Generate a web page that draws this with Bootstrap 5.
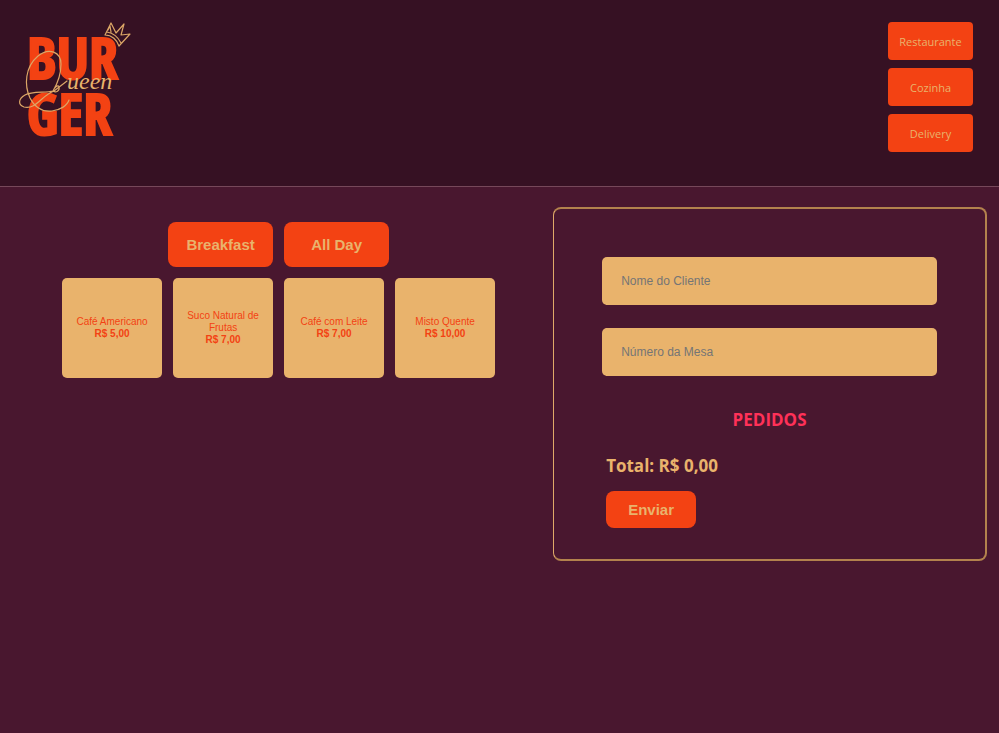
<!DOCTYPE html>
<html lang="pt-BR">
<head>
<meta charset="utf-8">
<meta name="viewport" content="width=device-width, initial-scale=1">
<title>Burger Queen</title>
<link href="https://cdn.jsdelivr.net/npm/bootstrap@5.3.0/dist/css/bootstrap.min.css" rel="stylesheet">
<style>
:root { --wine: #49172f; --wine-dark: #361123; --flame: #f34213; --sand: #e9b36c; --rose: #ff3158; }
body { background: var(--wine); font-family: "Open Sans", sans-serif; }
.top-bar { background: var(--wine-dark); border-bottom: 1px solid #76485a; padding: 20px 26px 34px 17px; }
.logo { width: 116px; height: 120px; overflow: visible; }
.logo .block-text { font: bold 58px "Open Sans Condensed", "Roboto", sans-serif; fill: var(--flame); stroke: var(--flame); stroke-width: 2; }
.logo .script-text { font: italic 24px "Liberation Serif", serif; fill: var(--sand); }
.logo path { fill: none; stroke: #dca767; stroke-width: 1.2; stroke-linecap: round; stroke-linejoin: round; }
.flame-btn, .flame-btn:hover { background: var(--flame); color: var(--sand); border: 0; }
.nav-btn { width: 85px; height: 38px; padding: 2px 0 0; font-size: 11px; border-radius: 4px; }
.nav-stack { gap: 8px; padding-top: 2px; }
.bold-btn { font: bold 15px "Liberation Sans", sans-serif; border-radius: 8px; padding: 0; }
.menu-btn { width: 105px; height: 45px; }
.send-btn { width: 90px; height: 37px; }
.menu-area { gap: 11px; padding-top: 15px; }
.menu-row { gap: 11px; }
.product { width: 100px; height: 100px; padding: 0 12px; border: 0; border-radius: 5px; background: var(--sand); color: var(--flame); font: 10px/12px "Liberation Sans", sans-serif; }
.order { width: 44.5%; border: 2px solid #b3824d; border-left: 1px solid #dfa968; border-radius: 8px; padding: 48px 48px 31px; }
.order-fields { gap: 23px; }
.order-input, .order-input:focus { height: 48px; padding: 0 19px; border: 0; border-radius: 5px; background: var(--sand); font: 12px "Liberation Sans", sans-serif; }
.order-input::placeholder { color: #757575; }
.order-title { font-size: 17px; line-height: 24px; font-weight: 700; color: var(--rose); margin: 32px 0 22px; }
.order-total { font-size: 17px; line-height: 24px; font-weight: 700; color: var(--sand); margin: 0 0 13px; }
</style>
</head>
<body>
<header class="top-bar d-flex justify-content-between align-items-start">
  <a href="#" aria-label="Burger Queen">
    <svg class="logo d-block" viewBox="17 20 116 120">
      <text class="block-text" x="27" y="79">BUR</text>
      <text class="block-text" x="27" y="135">GER</text>
      <path d="M38 56C49 47 61 52 61 64C61 75 56 86 53 91C45 93 32 91 25 95C18 99 18 105 24 107C36 110 42 95 54 91L67 81M38 56C25 67 24 85 30 98C35 108 43 112 52 111C60 110 67 106 69 100M53 91C56 93 60 91 59 87C58 84 54 88 53 91"/>
      <text class="script-text" x="67" y="89">ueen</text>
      <path d="M105 35L111 23L116 33L124 24L121 35L130 34L119 46C117 40 112 35 105 35ZM107 32C113 33 118 37 121 43M108 30L110 26L111 32"/>
    </svg>
  </a>
  <nav class="nav-stack d-flex flex-column">
    <button type="button" class="btn flame-btn nav-btn">Restaurante</button>
    <button type="button" class="btn flame-btn nav-btn">Cozinha</button>
    <button type="button" class="btn flame-btn nav-btn">Delivery</button>
  </nav>
</header>
<main class="container-fluid d-flex align-items-start gap-2 mt-3 pt-1">
  <section class="menu-area flex-fill d-flex flex-column">
    <div class="menu-row d-flex justify-content-center">
      <button type="button" class="btn flame-btn bold-btn menu-btn">Breakfast</button>
      <button type="button" class="btn flame-btn bold-btn menu-btn">All Day</button>
    </div>
    <div class="menu-row d-flex flex-wrap justify-content-center">
      <button type="button" class="product">Café Americano<b class="d-block">R$ 5,00</b></button>
      <button type="button" class="product">Suco Natural de Frutas<b class="d-block">R$ 7,00</b></button>
      <button type="button" class="product">Café com Leite<b class="d-block">R$ 7,00</b></button>
      <button type="button" class="product">Misto Quente<b class="d-block">R$ 10,00</b></button>
    </div>
  </section>
  <form class="order flex-shrink-0">
    <div class="order-fields d-flex flex-column">
      <input type="text" class="form-control order-input" placeholder="Nome do Cliente" aria-label="Nome do Cliente">
      <input type="text" class="form-control order-input" placeholder="Número da Mesa" aria-label="Número da Mesa">
    </div>
    <h2 class="order-title text-center">PEDIDOS</h2>
    <div class="px-1">
      <p class="order-total">Total: R$ 0,00</p>
      <button type="button" class="btn flame-btn bold-btn send-btn">Enviar</button>
    </div>
  </form>
</main>
<script src="https://cdn.jsdelivr.net/npm/bootstrap@5.3.0/dist/js/bootstrap.bundle.min.js"></script>
</body>
</html>
